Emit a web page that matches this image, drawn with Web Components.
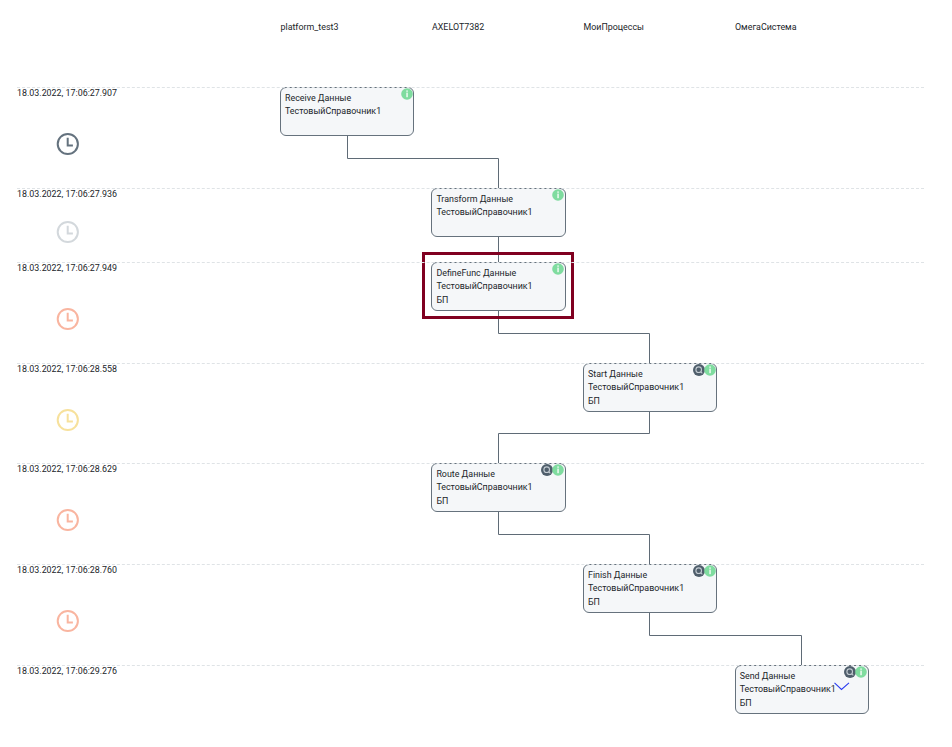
<!DOCTYPE html>
<html>
<head>
<meta charset="utf-8">
<title>Flow</title>
<style>
  html, body { margin: 0; background: #fff; }
  body { font-family: Roboto, "Liberation Sans", sans-serif; font-size: 8.9px; color: #212529; }
</style>
</head>
<body>
<flow-chart>
  <flow-row time="18.03.2022, 17:06:27.907" clock="#64727e" lane="0" height="101">
    <flow-node>Receive Данные<br>ТестовыйСправочник1</flow-node>
  </flow-row>
  <flow-row time="18.03.2022, 17:06:27.936" clock="#d3d8dc" lane="1" height="74">
    <flow-node>Transform Данные<br>ТестовыйСправочник1</flow-node>
  </flow-row>
  <flow-row time="18.03.2022, 17:06:27.949" clock="#f9b5a0" lane="1" height="101">
    <flow-node selected>DefineFunc Данные<br>ТестовыйСправочник1<br>БП</flow-node>
  </flow-row>
  <flow-row time="18.03.2022, 17:06:28.558" clock="#f7e19c" lane="2" height="100">
    <flow-node search>Start Данные<br>ТестовыйСправочник1<br>БП</flow-node>
  </flow-row>
  <flow-row time="18.03.2022, 17:06:28.629" clock="#f9b5a0" lane="1" height="101">
    <flow-node search>Route Данные<br>ТестовыйСправочник1<br>БП</flow-node>
  </flow-row>
  <flow-row time="18.03.2022, 17:06:28.760" clock="#f9b5a0" lane="2" height="101">
    <flow-node search>Finish Данные<br>ТестовыйСправочник1<br>БП</flow-node>
  </flow-row>
  <flow-row time="18.03.2022, 17:06:29.276" lane="3" height="82">
    <flow-node search check>Send Данные<br>ТестовыйСправочник1<br>БП</flow-node>
  </flow-row>
</flow-chart>

<script>
const LANES = ["platform_test3", "AXELOT7382", "МоиПроцессы", "ОмегаСистема"];

class ClockIcon extends HTMLElement {
  constructor() {
    super();
    this.attachShadow({ mode: "open" });
  }
  connectedCallback() {
    this.shadowRoot.innerHTML = `
    <style>
      :host { display: block; width: 24px; height: 24px; color: ${this.getAttribute("color")}; }
      svg { display: block; }
    </style>
    <svg width="24" height="24" viewBox="0 0 24 24" fill="none" stroke="currentColor" stroke-width="2">
      <circle cx="11.8" cy="12" r="10.1"/>
      <path d="M11.7 5.8v7.7h5.2"/>
    </svg>`;
  }
}

class FlowNode extends HTMLElement {
  constructor() {
    super();
    this.attachShadow({ mode: "open" });
  }
  connectedCallback() {
    const search = this.hasAttribute("search") ? `
      <svg class="search" width="12" height="12" viewBox="0 0 12 12">
        <circle cx="6" cy="6" r="6" fill="#4f5e6b"/>
        <circle cx="5.7" cy="5.7" r="2.8" fill="none" stroke="#c3cbd2" stroke-width="1.1"/>
        <path d="M7.7 7.7l1.6 1.6" stroke="#c3cbd2" stroke-width="1.1"/>
      </svg>` : "";
    const check = this.hasAttribute("check") ? `
      <svg class="check" width="16" height="9" viewBox="0 0 16 9" fill="none" stroke="#2a3cf0" stroke-width="1.1">
        <path d="M0.5 .8l7 6.6 7.5-6.6"/>
      </svg>` : "";
    const frame = this.hasAttribute("selected") ? `<div class="frame"></div>` : "";
    this.shadowRoot.innerHTML = `
    <style>
      :host { display: block; position: relative; width: 134.4px; height: 49px; box-sizing: border-box; }
      .box {
        box-sizing: border-box;
        height: 100%;
        padding: 4px 4px 0;
        background: #f5f7f9;
        border: 1px solid #66727d;
        border-radius: 6px;
        line-height: 13.4px;
        font-size: 8.9px;
        color: #212529;
        white-space: nowrap;
      }
      .icons { position: absolute; top: 1px; right: 1.6px; display: flex; gap: 0; align-items: center; }
      .icons svg { display: block; }
      .search { margin-right: -1px; }
      .check { position: absolute; left: 99px; top: 17px; }
      .frame { position: absolute; left: -9.4px; top: -10px; width: 152px; height: 67px; box-sizing: border-box; border: 3px solid #800020; }
    </style>
    <div class="box"><slot></slot></div>
    ${frame}
    <div class="icons">
      ${search}
      <svg width="12" height="12" viewBox="0 0 12 12">
        <circle cx="6" cy="6" r="5.8" fill="#7fdc9f"/>
        <rect x="5.4" y="2.4" width="1.3" height="1.4" fill="#fff"/>
        <rect x="5.4" y="4.6" width="1.3" height="4.6" fill="#fff"/>
      </svg>
    </div>
    ${check}`;
  }
}

class FlowRow extends HTMLElement {
  constructor() {
    super();
    this.attachShadow({ mode: "open" });
  }
  connectedCallback() {
    const lane = +this.getAttribute("lane");
    const clock = this.getAttribute("clock");
    this.shadowRoot.innerHTML = `
    <style>
      :host { display: grid; grid-template-columns: 280px 151.4px 151.6px 151.7px 151.3px; position: relative; height: ${this.getAttribute("height")}px; }
      .rule { position: absolute; left: 17px; width: 907px; top: 0; border-top: 1px dashed #dfe3e6; z-index: 1; }
      .time { display: flex; flex-direction: column; padding-left: 17px; }
      .label { height: 13px; line-height: 13px; white-space: nowrap; font-size: 8.9px; color: #212529; }
      .mid { flex: 1; display: flex; align-items: center; padding-left: 39px; }
      .lane { grid-column: ${lane + 2}; }
    </style>
    <div class="rule"></div>
    <div class="time">
      <div class="label">${this.getAttribute("time")}</div>
      <div class="mid">${clock ? `<clock-icon color="${clock}"></clock-icon>` : ""}</div>
    </div>
    <div class="lane"><slot></slot></div>`;
  }
}

class FlowChart extends HTMLElement {
  constructor() {
    super();
    this.attachShadow({ mode: "open" });
  }
  connectedCallback() {
    // connector lines, in page coordinates
    const links = [
      "M347.5 135V158.5H498.5V188",
      "M498.5 236V262",
      "M498.5 310V333.5H649.5V363",
      "M649.5 411V433.5H498.5V463",
      "M498.5 512V534.5H649.5V564",
      "M649.5 612V635.5H801.5V665"
    ];
    this.shadowRoot.innerHTML = `
    <style>
      :host { display: block; position: relative; width: 952px; height: 747px; overflow: hidden; }
      header { display: grid; grid-template-columns: repeat(4, 151.5px); height: 87px; box-sizing: border-box; padding: 21px 0 0 280.5px; font-size: 8.9px; line-height: 13px; color: #212529; }
      svg { position: absolute; left: 0; top: 0; }
    </style>
    <svg width="952" height="747" fill="none" stroke="#5f6b76" stroke-width="1">
      ${links.map(d => `<path d="${d}"/>`).join("")}
    </svg>
    <header>${LANES.map(n => `<span>${n}</span>`).join("")}</header>
    <slot></slot>`;
  }
}

customElements.define("clock-icon", ClockIcon);
customElements.define("flow-node", FlowNode);
customElements.define("flow-row", FlowRow);
customElements.define("flow-chart", FlowChart);
</script>
</body>
</html>
